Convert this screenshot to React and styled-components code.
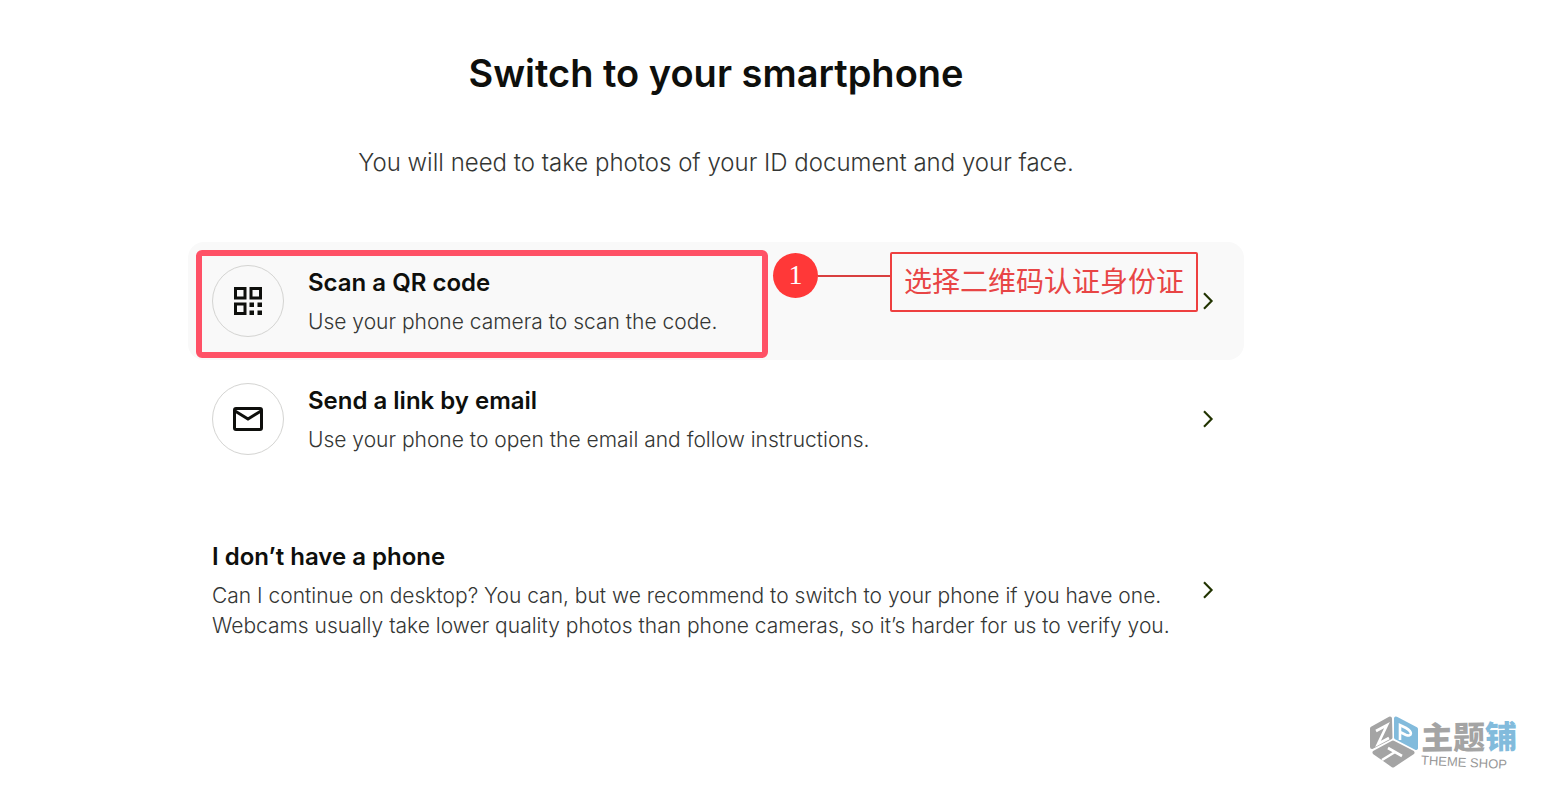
import React from "react";
import styled, { createGlobalStyle } from "styled-components";

const GlobalStyle = createGlobalStyle`
  * { box-sizing: border-box; }
  body {
    margin: 0;
    background: #ffffff;
    color: #0e0f0c;
    font-family: Inter, "Noto Sans CJK SC", sans-serif;
  }
`;

const Page = styled.div`
  min-height: 100vh;
  display: flex;
  flex-direction: column;
`;

const Main = styled.main`
  width: 100%;
  flex: 1;
  display: flex;
  flex-direction: column;
  align-items: center;
  padding: 47px 118px 0 0;
`;

const Title = styled.h1`
  margin: 0;
  font-size: 38px;
  line-height: 52px;
  font-weight: 600;
  text-align: center;
`;

const Lead = styled.p`
  margin: 46px 0 0;
  font-size: 24px;
  line-height: 36px;
  font-weight: 300;
  color: #343634;
  text-align: center;
`;

const Options = styled.ul`
  width: 100%;
  max-width: 1056px;
  margin: 61px 0 0;
  padding: 0;
  list-style: none;
`;

const Option = styled.li`
  position: relative;
  margin-top: ${(p) => (p.$separated ? "38px" : "0")};
`;

const OptionButton = styled.button`
  width: 100%;
  display: flex;
  align-items: center;
  gap: 24px;
  padding: 23px 30px 23px 24px;
  border: 0;
  border-radius: 16px;
  background: ${(p) => (p.$active ? "#f9f9f9" : "transparent")};
  color: inherit;
  font-family: inherit;
  text-align: left;
  cursor: pointer;
`;

const IconCircle = styled.span`
  flex: none;
  width: 72px;
  height: 72px;
  display: flex;
  align-items: center;
  justify-content: center;
  border: 1px solid #d4d4d2;
  border-radius: 50%;
`;

const OptionText = styled.span`
  flex: 1;
  display: flex;
  flex-direction: column;
  gap: 6px;
`;

const OptionTitle = styled.span`
  font-size: 24px;
  line-height: 36px;
  font-weight: 600;
`;

const OptionDetail = styled.span`
  font-size: 21px;
  line-height: 30px;
  font-weight: 300;
  color: #343634;
`;

const Highlight = styled.div`
  position: absolute;
  top: 8px;
  left: 8px;
  width: 572px;
  height: 108px;
  border: 6px solid #ff5166;
  border-radius: 6px;
  pointer-events: none;
`;

const Callout = styled.div`
  position: absolute;
  top: 10px;
  left: 585px;
  display: flex;
  pointer-events: none;
`;

const StepBadge = styled.span`
  width: 45px;
  height: 45px;
  margin-top: 1px;
  border-radius: 50%;
  background: #ff3838;
  color: #ffffff;
  font: 28px/44px "Liberation Serif", serif;
  text-align: center;
`;

const Connector = styled.span`
  width: 72px;
  height: 2px;
  margin-top: 23px;
  background: #d94040;
`;

const CalloutBox = styled.span`
  height: 60px;
  padding: 0 12px;
  border: 2px solid #ee4040;
  border-radius: 2px;
  color: #e84545;
  font: 400 28px/52px "Noto Sans CJK SC", sans-serif;
  white-space: nowrap;
`;

const Footer = styled.footer`
  display: flex;
  justify-content: flex-end;
  align-items: center;
  gap: 2px;
  padding: 0 33px 22px 0;
`;

const Brand = styled.div`
  display: flex;
  flex-direction: column;
  padding-top: 4px;
`;

const BrandName = styled.div`
  font: 900 32px/36px "Noto Sans CJK SC", sans-serif;
  color: #a4a4a4;
  transform: rotate(-1deg);
`;

const BrandAccent = styled.span`
  color: #82bbdc;
`;

const BrandTag = styled.div`
  padding-top: 2px;
  font: 13px/16px "Liberation Sans", sans-serif;
  color: #989898;
  transform: rotate(3deg);
`;

function Chevron() {
  return (
    <svg width="12" height="18" viewBox="0 0 12 18" fill="none" aria-hidden="true">
      <path d="M2 1.2 9.6 9 2 16.8" stroke="#213300" strokeWidth="2.1" />
    </svg>
  );
}

function QrIcon() {
  return (
    <svg width="28" height="28" viewBox="0 0 28 28" aria-hidden="true">
      <g fill="none" stroke="#0e0f0c" strokeWidth="3">
        <path d="M1.5 1.5h9.5v9.5h-9.5zM17 1.5h9.5v9.5H17zM1.5 17h9.5v9.5h-9.5z" />
      </g>
      <path d="M15.5 15.5h4.5v4.5h-4.5zM23.5 15.5H28v4.5h-4.5zM15.5 23.5h4.5V28h-4.5zM23.5 23.5H28V28h-4.5z" fill="#0e0f0c" />
    </svg>
  );
}

function MailIcon() {
  return (
    <svg width="32" height="26" viewBox="0 0 32 26" fill="none" aria-hidden="true">
      <rect x="2.5" y="2.5" width="27" height="21" rx="1.5" stroke="#0e0f0c" strokeWidth="3" />
      <path d="M3 5 16 13 29 5" stroke="#0e0f0c" strokeWidth="3" />
    </svg>
  );
}

function CubeLogo() {
  return (
    <svg width="50" height="54" viewBox="0 0 50 54" aria-hidden="true">
      <g strokeWidth="4" strokeLinejoin="round">
        <path d="M21 3.5 3 13.5v18.5l18.5-9.5z" fill="#a4a4a4" stroke="#a4a4a4" />
        <path d="M27 3.5v19l20 10.5V14z" fill="#82bbdc" stroke="#82bbdc" />
        <path d="M24 27.5 5.5 37.5 24 50.5 43.5 37.5z" fill="#a4a4a4" stroke="#a4a4a4" />
      </g>
      <g fill="none" stroke="#ffffff" strokeWidth="2.6">
        <path d="m7 16 11-6-9 19 11-6" />
        <path d="M31 25V10l6 3c7 4 6 9 0 7l-6-3" />
        <path d="m19 33 14 8M13 45l13-8" />
      </g>
    </svg>
  );
}

export default function App() {
  return (
    <Page>
      <GlobalStyle />
      <Main>
        <Title>Switch to your smartphone</Title>
        <Lead>You will need to take photos of your ID document and your face.</Lead>
        <Options>
          <Option>
            <OptionButton type="button" $active>
              <IconCircle><QrIcon /></IconCircle>
              <OptionText>
                <OptionTitle>Scan a QR code</OptionTitle>
                <OptionDetail>Use your phone camera to scan the code.</OptionDetail>
              </OptionText>
              <Chevron />
            </OptionButton>
            <Highlight />
            <Callout>
              <StepBadge>1</StepBadge>
              <Connector />
              <CalloutBox lang="zh-CN">选择二维码认证身份证</CalloutBox>
            </Callout>
          </Option>
          <Option>
            <OptionButton type="button">
              <IconCircle><MailIcon /></IconCircle>
              <OptionText>
                <OptionTitle>Send a link by email</OptionTitle>
                <OptionDetail>Use your phone to open the email and follow instructions.</OptionDetail>
              </OptionText>
              <Chevron />
            </OptionButton>
          </Option>
          <Option $separated>
            <OptionButton type="button">
              <OptionText>
                <OptionTitle>I don’t have a phone</OptionTitle>
                <OptionDetail>
                  Can I continue on desktop? You can, but we recommend to switch to your phone if you have one.
                  Webcams usually take lower quality photos than phone cameras, so it’s harder for us to verify you.
                </OptionDetail>
              </OptionText>
              <Chevron />
            </OptionButton>
          </Option>
        </Options>
      </Main>
      <Footer>
        <CubeLogo />
        <Brand>
          <BrandName lang="zh-CN">主题<BrandAccent>铺</BrandAccent></BrandName>
          <BrandTag>THEME SHOP</BrandTag>
        </Brand>
      </Footer>
    </Page>
  );
}
